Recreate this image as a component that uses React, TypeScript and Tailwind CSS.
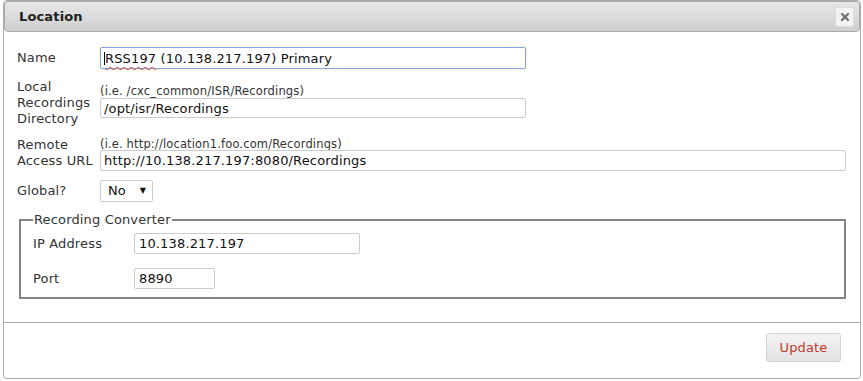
import { X } from "lucide-react";

const font = "font-['DejaVu_Sans',Verdana,sans-serif]";

const App = () => {
  return (
    <div className={`w-[863px] h-[381px] bg-white ${font} text-[13px] text-[#333] tracking-[0.15px]`}>
      <div className="ml-[3px] w-[858px] h-[379px] border border-[#aaa] rounded-[4px] bg-white flex flex-col">
        {/* title bar */}
        <div className="h-[31px] border border-[#aaa] rounded-[4px] bg-gradient-to-b from-[#e8e8e8] to-[#cfcfcf] flex items-center justify-between pl-[14px] pr-[5px]">
          <span className="font-bold text-[#222]">Location</span>
          <div className="w-[19px] h-[20px] bg-[#f3f3f3] border border-[#dcdcdc] rounded-[2px] flex items-center justify-center">
            <X size={12} strokeWidth={4.5} className="text-[#6f6f6f]" />
          </div>
        </div>

        {/* form */}
        <div className="pl-[13px] pr-[13px] pt-[15px] flex flex-col">
          <div className="flex items-center">
            <div className="w-[83px]">Name</div>
            <div className="w-[426px] h-[22px] border border-[#7fa6e4] rounded-[2px] shadow-[0_0_2px_1px_#fdf3c8] flex items-center pl-[3px] text-[#111] leading-none">
              <span className="border-l border-[#000] underline decoration-wavy decoration-[#e04040] decoration-1 underline-offset-[3px]">RSS197</span>
              <span className="whitespace-pre"> (10.138.217.197) Primary</span>
            </div>
          </div>

          <div className="flex items-start mt-[10px]">
            <div className="w-[83px] leading-[16px]">
              Local
              <br />
              Recordings
              <br />
              Directory
            </div>
            <div className="flex flex-col mt-[6px]">
              <div className="text-[11.5px] leading-[13px]">(i.e. /cxc_common/ISR/Recordings)</div>
              <input
                readOnly
                value="/opt/isr/Recordings"
                className="w-[426px] h-[20px] border border-[#ccc] rounded-[2px] px-[3px] text-[13px] tracking-[0.15px] text-[#111] outline-none"
              />
            </div>
          </div>

          <div className="flex items-start mt-[10px]">
            <div className="w-[83px] leading-[16px]">
              Remote
              <br />
              Access URL
            </div>
            <div className="flex flex-col mt-[1px]">
              <div className="text-[11.5px] leading-[12px]">(i.e. http://location1.foo.com/Recordings)</div>
              <input
                readOnly
                value="http://10.138.217.197:8080/Recordings"
                className="w-[746px] h-[21px] border border-[#ccc] rounded-[2px] px-[3px] text-[13px] tracking-[0.15px] text-[#111] outline-none"
              />
            </div>
          </div>

          <div className="flex items-center mt-[9px]">
            <div className="w-[83px]">Global?</div>
            <div className="w-[53px] h-[22px] border border-[#ccc] rounded-[2px] flex items-center pl-[7px] pr-[6px] justify-between text-[#111]">
              <span>No</span>
              <span className="text-[8px]">▼</span>
            </div>
          </div>
        </div>

        <fieldset className="ml-[15px] mt-[10px] w-[827px] border-2 border-[#858585] pl-[12px] pb-[8px]">
          <legend className="px-[1px] leading-[16px]">Recording Converter</legend>
          <div className="flex flex-col gap-[14px] mt-[5px]">
            <div className="flex items-center">
              <div className="w-[101px]">IP Address</div>
              <input
                readOnly
                value="10.138.217.197"
                className="w-[226px] h-[21px] border border-[#ccc] rounded-[2px] px-[4px] text-[13px] tracking-[0.15px] text-[#111] outline-none"
              />
            </div>
            <div className="flex items-center">
              <div className="w-[101px]">Port</div>
              <input
                readOnly
                value="8890"
                className="w-[81px] h-[21px] border border-[#ccc] rounded-[2px] px-[4px] text-[13px] tracking-[0.15px] text-[#111] outline-none"
              />
            </div>
          </div>
        </fieldset>

        <div className="mt-[23px] border-t border-[#aaa]" />

        <div className="flex justify-end pr-[19px] pt-[10px]">
          <button className="w-[75px] h-[29px] border border-[#d3d3d3] rounded-[3px] bg-gradient-to-b from-[#f4f4f4] to-[#e3e3e3] text-[#c0392b] text-[13px]">
            Update
          </button>
        </div>
      </div>
    </div>
  );
};

export default App;
